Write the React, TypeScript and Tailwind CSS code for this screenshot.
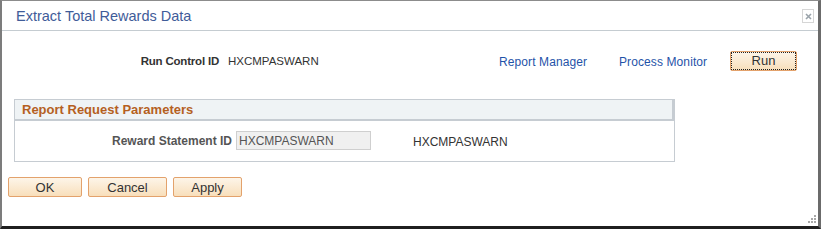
import React from "react";

const font = "font-['Liberation_Sans',Arial,sans-serif]";

function PsButton({ label, width, focused = false }: { label: string; width: string; focused?: boolean }) {
  return (
    <button
      className={`${width} h-[20px] rounded-[2px] border border-[#e3a26c] bg-gradient-to-b from-[#fdf5e9] to-[#f8dfbb] text-[13px] leading-none text-[#333] ${font} flex items-center justify-center p-0`}
    >
      {focused ? (
        <span className="flex h-full w-full items-center justify-center border border-dotted border-[#222]">
          {label}
        </span>
      ) : (
        label
      )}
    </button>
  );
}

export default function App() {
  return (
    <div
      className={`relative flex h-[229px] w-[821px] flex-col overflow-hidden border-t border-l-2 border-r-[3px] border-b-[3px] border-t-[#8c8c8c] border-l-[#7c7c7c] border-r-[#6b6b6b] border-b-[#1f1f1f] bg-white ${font}`}
    >
      {/* Title bar */}
      <div className="flex h-[30px] shrink-0 items-center justify-between border-b border-[#c5ccd1] pl-[14px] pr-[4px]">
        <span className="mt-[1px] text-[14.5px] leading-none text-[#3f5c99]">Extract Total Rewards Data</span>
        <span className="mt-[1px] flex h-[14px] w-[12px] items-center justify-center border border-[#d6d6d6]">
          <svg width="7" height="7" viewBox="0 0 7 7">
            <path d="M1 1L6 6M6 1L1 6" stroke="#9aa3aa" strokeWidth="1.6" />
          </svg>
        </span>
      </div>

      {/* Run control row */}
      <div className="mt-[19px] flex h-[21px] items-center text-[11.5px] text-[#333]">
        <span className="mt-[3px] w-[217px] text-right font-bold tracking-[-0.2px]">Run Control ID</span>
        <span className="ml-[9px] mt-[3px] w-[271px]">HXCMPASWARN</span>
        <a className="mt-[3px] w-[120px] text-[12px] tracking-[0.1px] text-[#1f53a8]">Report Manager</a>
        <a className="mt-[3px] w-[111px] text-[12px] tracking-[0.1px] text-[#1f53a8]">Process Monitor</a>
        <PsButton label="Run" width="w-[67px]" focused />
      </div>

      {/* Report Request Parameters group */}
      <div className="ml-[12px] mt-[28px] w-[661px] border border-[#c6ccd2]">
        <div className="flex h-[21px] items-center border-b-2 border-r-2 border-[#c6ccd2] bg-[#eff3f5] pl-[7px] pt-[1px] text-[13px] font-bold text-[#b5601f]">
          Report Request Parameters
        </div>
        <div className="flex h-[40px] items-start pt-[10px] text-[12px] text-[#333]">
          <span className="flex h-[19px] w-[217px] items-center justify-end font-bold text-[#555]">
            Reward Statement ID
          </span>
          <span className="ml-[4px] flex h-[19px] w-[135px] items-center border border-[#cfcfcf] bg-[#f0f0f0] pl-[2px] text-[#555]">
            HXCMPASWARN
          </span>
          <span className="ml-[42px] flex h-[22px] items-center text-[#333]">HXCMPASWARN</span>
        </div>
      </div>

      {/* Bottom buttons */}
      <div className="ml-[6px] mt-[15px] flex gap-[6px]">
        <PsButton label="OK" width="w-[74px]" />
        <PsButton label="Cancel" width="w-[79px]" />
        <PsButton label="Apply" width="w-[69px]" />
      </div>

      {/* Resize grip */}
      <div className="absolute bottom-[3px] right-[2px] grid grid-cols-3 gap-[1px]">
        <span className="h-[2px] w-[2px]" />
        <span className="h-[2px] w-[2px]" />
        <span className="h-[2px] w-[2px] bg-[#a8a8a8]" />
        <span className="h-[2px] w-[2px]" />
        <span className="h-[2px] w-[2px] bg-[#a8a8a8]" />
        <span className="h-[2px] w-[2px] bg-[#a8a8a8]" />
        <span className="h-[2px] w-[2px] bg-[#a8a8a8]" />
        <span className="h-[2px] w-[2px] bg-[#a8a8a8]" />
        <span className="h-[2px] w-[2px] bg-[#a8a8a8]" />
      </div>
    </div>
  );
}
